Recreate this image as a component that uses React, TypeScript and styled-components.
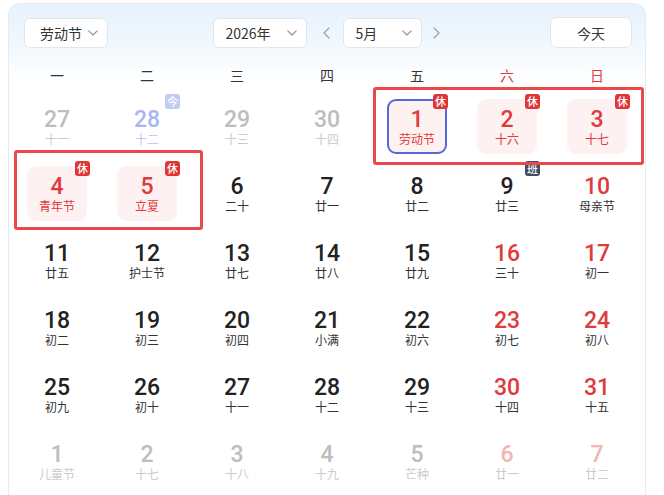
import React from 'react';
import styled, { createGlobalStyle } from 'styled-components';

const Global = createGlobalStyle`
  html, body { margin: 0; padding: 0; background: #ffffff; }
  body { font-family: "Noto Sans CJK SC", "Noto Sans", sans-serif; color: #333; }
`;

type Tone = 'normal' | 'weekend' | 'holiday' | 'muted' | 'mutedWeekend' | 'mutedToday';
type BadgeKind = 'rest' | 'work' | 'today';

interface Day {
  n: number;
  l: string;
  tone?: Tone;
  selected?: boolean;
  badge?: BadgeKind;
}

const numColor: Record<Tone, string> = {
  normal: '#222222',
  weekend: '#e03a3c',
  holiday: '#e03a3c',
  muted: '#bdbdbd',
  mutedWeekend: '#f3b4b4',
  mutedToday: '#a9b5f1',
};
const lunarColor: Record<Tone, string> = {
  normal: '#333333',
  weekend: '#333333',
  holiday: '#e03a3c',
  muted: '#cccccc',
  mutedWeekend: '#cccccc',
  mutedToday: '#c3cbf3',
};
const badgeBg: Record<BadgeKind, string> = {
  rest: '#e03535',
  work: '#434c66',
  today: '#c3cbf5',
};
const badgeText: Record<BadgeKind, string> = { rest: '休', work: '班', today: '今' };

const weeks: Day[][] = [
  [
    { n: 27, l: '十一', tone: 'muted' },
    { n: 28, l: '十二', tone: 'mutedToday', badge: 'today' },
    { n: 29, l: '十三', tone: 'muted' },
    { n: 30, l: '十四', tone: 'muted' },
    { n: 1, l: '劳动节', tone: 'holiday', selected: true, badge: 'rest' },
    { n: 2, l: '十六', tone: 'holiday', badge: 'rest' },
    { n: 3, l: '十七', tone: 'holiday', badge: 'rest' },
  ],
  [
    { n: 4, l: '青年节', tone: 'holiday', badge: 'rest' },
    { n: 5, l: '立夏', tone: 'holiday', badge: 'rest' },
    { n: 6, l: '二十' },
    { n: 7, l: '廿一' },
    { n: 8, l: '廿二' },
    { n: 9, l: '廿三', badge: 'work' },
    { n: 10, l: '母亲节', tone: 'weekend' },
  ],
  [
    { n: 11, l: '廿五' },
    { n: 12, l: '护士节' },
    { n: 13, l: '廿七' },
    { n: 14, l: '廿八' },
    { n: 15, l: '廿九' },
    { n: 16, l: '三十', tone: 'weekend' },
    { n: 17, l: '初一', tone: 'weekend' },
  ],
  [
    { n: 18, l: '初二' },
    { n: 19, l: '初三' },
    { n: 20, l: '初四' },
    { n: 21, l: '小满' },
    { n: 22, l: '初六' },
    { n: 23, l: '初七', tone: 'weekend' },
    { n: 24, l: '初八', tone: 'weekend' },
  ],
  [
    { n: 25, l: '初九' },
    { n: 26, l: '初十' },
    { n: 27, l: '十一' },
    { n: 28, l: '十二' },
    { n: 29, l: '十三' },
    { n: 30, l: '十四', tone: 'weekend' },
    { n: 31, l: '十五', tone: 'weekend' },
  ],
  [
    { n: 1, l: '儿童节', tone: 'muted' },
    { n: 2, l: '十七', tone: 'muted' },
    { n: 3, l: '十八', tone: 'muted' },
    { n: 4, l: '十九', tone: 'muted' },
    { n: 5, l: '芒种', tone: 'muted' },
    { n: 6, l: '廿一', tone: 'mutedWeekend' },
    { n: 7, l: '廿二', tone: 'mutedWeekend' },
  ],
];

const weekdays = ['一', '二', '三', '四', '五', '六', '日'];

const Card = styled.div`
  margin: 3px 0 0 8px;
  width: 638px;
  height: 530px;
  box-sizing: border-box;
  border: 1px solid #e6ebf0;
  border-radius: 12px;
  background: linear-gradient(180deg, #e6f2fc 0px, #f1f8fe 40px, #ffffff 78px);
  padding: 13px 3px 0;
`;

const Header = styled.div`
  display: grid;
  grid-template-columns: 1fr auto 1fr;
  align-items: center;
  height: 30px;
  padding: 0 10px 0 12px;
`;

const Center = styled.div`
  display: flex;
  align-items: center;
`;

const SelectBox = styled.div<{ $w?: number; $pl: number }>`
  display: flex;
  align-items: center;
  justify-content: space-between;
  gap: 6px;
  box-sizing: border-box;
  height: 30px;
  width: ${(p) => (p.$w ? `${p.$w}px` : 'auto')};
  padding: 0 9px 0 ${(p) => p.$pl}px;
  background: #ffffff;
  border: 1px solid #e2e6eb;
  border-radius: 6px;
  font-size: 14px;
  color: #333;
`;

const LeftSlot = styled.div`
  justify-self: start;
`;
const RightSlot = styled.div`
  justify-self: end;
`;

const TodayButton = styled.div`
  display: flex;
  align-items: center;
  justify-content: center;
  box-sizing: border-box;
  width: 82px;
  height: 31px;
  background: #ffffff;
  border: 1px solid #e2e6eb;
  border-radius: 7px;
  font-size: 14px;
  color: #333;
`;

const NavArrow = styled.div<{ $ml: number; $mr: number }>`
  display: flex;
  align-items: center;
  justify-content: center;
  width: 14px;
  height: 30px;
  margin: 0 ${(p) => p.$mr}px 0 ${(p) => p.$ml}px;
`;

const Weekdays = styled.div`
  display: grid;
  grid-template-columns: repeat(7, 90px);
  margin-top: 9px;
  height: 37px;
  align-items: center;
  justify-items: center;
`;

const Weekday = styled.div<{ $red: boolean }>`
  font-size: 14px;
  color: ${(p) => (p.$red ? '#e03a3c' : '#333')};
`;

const Grid = styled.div`
  position: relative;
  display: grid;
  grid-template-columns: repeat(7, 90px);
  grid-auto-rows: 67px;
`;

const Cell = styled.div`
  display: flex;
  justify-content: center;
  padding-top: 6px;
`;

const DayBox = styled.div<{ $holiday: boolean; $selected: boolean }>`
  position: relative;
  box-sizing: border-box;
  width: 60px;
  height: 55px;
  border-radius: 9px;
  display: flex;
  flex-direction: column;
  align-items: center;
  padding-top: ${(p) => (p.$selected ? 7 : 9)}px;
  background: ${(p) => (p.$holiday ? '#fef1f1' : 'transparent')};
  border: ${(p) => (p.$selected ? '2px solid #5169da' : 'none')};
`;

const Num = styled.div<{ $tone: Tone }>`
  font-family: Roboto, "Noto Sans", sans-serif;
  font-weight: 500;
  font-size: 23px;
  line-height: 23px;
  height: 23px;
  color: ${(p) => numColor[p.$tone]};
`;

const Lunar = styled.div<{ $tone: Tone }>`
  font-size: 12px;
  line-height: 16px;
  height: 16px;
  color: ${(p) => lunarColor[p.$tone]};
  white-space: nowrap;
`;

const Badge = styled.div<{ $kind: BadgeKind; $selected: boolean }>`
  position: absolute;
  top: ${(p) => (p.$selected ? -7 : -5)}px;
  right: -3px;
  width: 15px;
  height: 15px;
  border-radius: 3px;
  background: ${(p) => badgeBg[p.$kind]};
  color: #ffffff;
  font-size: 11px;
  line-height: 15px;
  text-align: center;
  font-weight: 500;
`;

const Highlight = styled.div<{ $x: number; $y: number; $w: number; $h: number }>`
  position: absolute;
  left: ${(p) => p.$x}px;
  top: ${(p) => p.$y}px;
  width: ${(p) => p.$w}px;
  height: ${(p) => p.$h}px;
  box-sizing: border-box;
  border: 3px solid #e9494b;
  border-radius: 3px;
  pointer-events: none;
`;

const ChevronDown = () => (
  <svg width="10" height="6" viewBox="0 0 10 6" fill="none">
    <polyline points="0.8,0.8 5,5 9.2,0.8" stroke="#8a8f96" strokeWidth="1.1" strokeLinecap="round" strokeLinejoin="round" />
  </svg>
);

const ChevronSide = ({ dir }: { dir: 'left' | 'right' }) => (
  <svg width="7" height="12" viewBox="0 0 7 12" fill="none">
    <polyline
      points={dir === 'left' ? '6,1 1,6 6,11' : '1,1 6,6 1,11'}
      stroke="#9aa0a6"
      strokeWidth="1.2"
      strokeLinecap="round"
      strokeLinejoin="round"
    />
  </svg>
);

export default function App() {
  return (
    <>
      <Global />
      <Card>
        <Header>
          <LeftSlot>
            <SelectBox $pl={15}>
              <span>劳动节</span>
              <ChevronDown />
            </SelectBox>
          </LeftSlot>
          <Center>
            <SelectBox $w={94} $pl={12}>
              <span>2026年</span>
              <ChevronDown />
            </SelectBox>
            <NavArrow $ml={13} $mr={9}>
              <ChevronSide dir="left" />
            </NavArrow>
            <SelectBox $w={79} $pl={12}>
              <span>5月</span>
              <ChevronDown />
            </SelectBox>
            <NavArrow $ml={8} $mr={0}>
              <ChevronSide dir="right" />
            </NavArrow>
          </Center>
          <RightSlot>
            <TodayButton>今天</TodayButton>
          </RightSlot>
        </Header>
        <Weekdays>
          {weekdays.map((w, i) => (
            <Weekday key={w} $red={i >= 5}>
              {w}
            </Weekday>
          ))}
        </Weekdays>
        <Grid>
          {weeks.flat().map((d, i) => {
            const tone = d.tone ?? 'normal';
            const holiday = tone === 'holiday';
            return (
              <Cell key={i}>
                <DayBox $holiday={holiday} $selected={!!d.selected}>
                  <Num $tone={tone}>{d.n}</Num>
                  <Lunar $tone={tone}>{d.l}</Lunar>
                  {d.badge && (
                    <Badge $kind={d.badge} $selected={!!d.selected}>
                      {badgeText[d.badge]}
                    </Badge>
                  )}
                </DayBox>
              </Cell>
            );
          })}
          <Highlight $x={361} $y={-6} $w={271} $h={78} />
          <Highlight $x={2} $y={57} $w={189} $h={80} />
        </Grid>
      </Card>
    </>
  );
}
